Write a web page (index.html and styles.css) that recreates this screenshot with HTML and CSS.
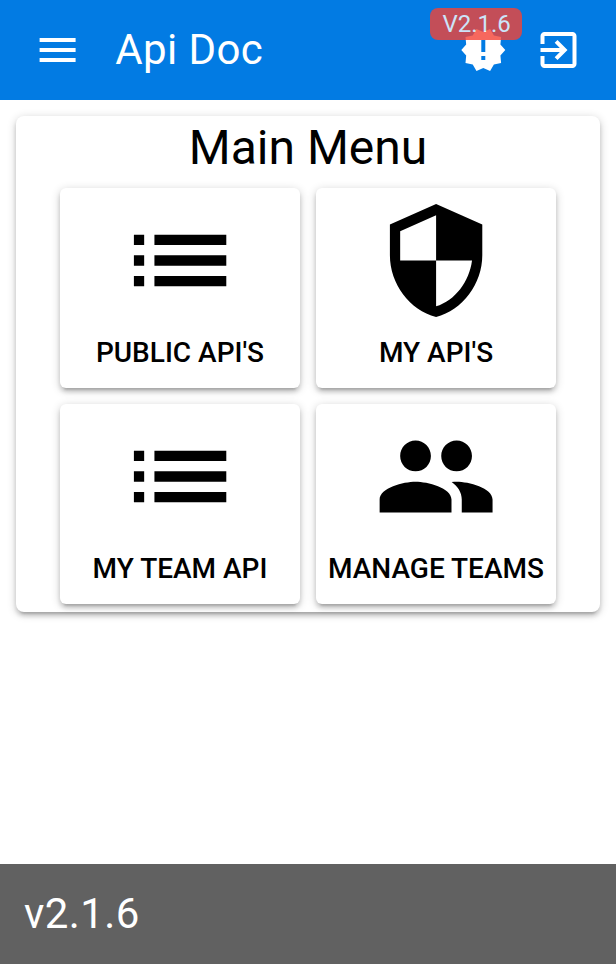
FILE: index.html
```html
<!DOCTYPE html>
<html lang="en">
<head>
<meta charset="utf-8">
<title>Api Doc</title>
<link rel="stylesheet" href="styles.css">
</head>
<body>
<div class="layout">
  <header class="toolbar header">
    <button class="round-btn menu-btn" aria-label="Menu">
      <svg class="icon" viewBox="0 0 24 24"><path d="M3 18h18v-2H3v2zm0-5h18v-2H3v2zm0-7v2h18V6H3z"/></svg>
    </button>
    <div class="toolbar-title header-title">Api Doc</div>
    <button class="round-btn release-btn" aria-label="Release">
      <svg class="icon" viewBox="0 0 24 24"><path d="M23 12l-2.44-2.78.34-3.68-3.61-.82-1.89-3.18L12 3 8.6 1.54 6.71 4.72l-3.61.81.34 3.68L1 12l2.44 2.78-.34 3.69 3.61.82 1.89 3.18L12 21l3.4 1.46 1.89-3.18 3.61-.82-.34-3.68L23 12zm-10 5h-2v-2h2v2zm0-4h-2V7h2v6z"/></svg>
      <span class="badge">V2.1.6</span>
    </button>
    <button class="round-btn exit-btn" aria-label="Exit">
      <svg class="icon" viewBox="0 0 24 24"><path d="M10.09 15.59L11.5 17l5-5-5-5-1.41 1.41L12.67 11H3v2h9.67l-2.58 2.59zM19 3H5c-1.11 0-2 .9-2 2v4h2V5h14v14H5v-4H3v4c0 1.1.89 2 2 2h14c1.1 0 2-.9 2-2V5c0-1.1-.9-2-2-2z"/></svg>
    </button>
  </header>
  <main class="page">
    <section class="card">
      <h1 class="card-title">Main Menu</h1>
      <div class="tiles">
        <button class="tile">
          <svg class="tile-icon" viewBox="0 0 24 24"><path d="M3 13h2v-2H3v2zm0 4h2v-2H3v2zm0-8h2V7H3v2zm4 4h14v-2H7v2zm0 4h14v-2H7v2zM7 7v2h14V7H7z"/></svg>
          <span>PUBLIC API'S</span>
        </button>
        <button class="tile">
          <svg class="tile-icon" viewBox="0 0 24 24"><path d="M12 1L3 5v6c0 5.55 3.84 10.74 9 12 5.16-1.26 9-6.45 9-12V5l-9-4zm0 10.99h7c-.53 4.12-3.28 7.79-7 8.94V12H5V6.3l7-3.11v8.8z"/></svg>
          <span>MY API'S</span>
        </button>
        <button class="tile">
          <svg class="tile-icon" viewBox="0 0 24 24"><path d="M3 13h2v-2H3v2zm0 4h2v-2H3v2zm0-8h2V7H3v2zm4 4h14v-2H7v2zm0 4h14v-2H7v2zM7 7v2h14V7H7z"/></svg>
          <span>MY TEAM API</span>
        </button>
        <button class="tile">
          <svg class="tile-icon" viewBox="0 0 24 24"><path d="M16 11c1.66 0 2.99-1.34 2.99-3S17.66 5 16 5c-1.66 0-3 1.34-3 3s1.34 3 3 3zm-8 0c1.66 0 2.99-1.34 2.99-3S9.66 5 8 5C6.34 5 5 6.34 5 8s1.34 3 3 3zm0 2c-2.33 0-7 1.17-7 3.5V19h14v-2.5c0-2.33-4.67-3.5-7-3.5zm8 0c-.29 0-.62.02-.97.05 1.16.84 1.97 1.97 1.97 3.45V19h6v-2.5c0-2.33-4.67-3.5-7-3.5z"/></svg>
          <span>MANAGE TEAMS</span>
        </button>
      </div>
    </section>
  </main>
  <footer class="toolbar footer">
    <div class="toolbar-title">v2.1.6</div>
  </footer>
</div>
</body>
</html>
```
FILE: styles.css
```css
* {
  box-sizing: border-box;
}

body {
  margin: 0;
  background: #fff;
  color: #000;
  font-family: Roboto, sans-serif;
}

button {
  margin: 0;
  border: 0;
  padding: 0;
  font: inherit;
  color: inherit;
  background: none;
}

svg {
  display: block;
  fill: currentColor;
  overflow: visible;
}

.layout {
  display: flex;
  flex-direction: column;
  height: 100vh;
}

.toolbar {
  display: flex;
  flex: none;
  align-items: center;
  height: 100px;
  padding: 0 24px;
  color: #fff;
}

.header {
  background: #027be3;
}

.footer {
  background: #616161;
}

.toolbar-title {
  flex: 1;
  font-size: 42px;
  letter-spacing: 0.01em;
  line-height: 62px;
}

.header-title {
  padding: 0 24px;
}

.round-btn {
  position: relative;
  display: flex;
  align-items: center;
  justify-content: center;
  width: 67.2px;
  height: 67.2px;
}

.release-btn {
  margin-right: 8px;
}

.icon {
  width: 48px;
  height: 48px;
}

.menu-btn .icon {
  transform: translateX(-0.4px);
}

.release-btn .icon {
  transform: translateX(0.3px);
}

.exit-btn .icon {
  transform: translateX(0.5px);
}

.badge {
  position: absolute;
  top: -8px;
  right: -5px;
  padding: 4px 11px 4px 12.5px;
  border-radius: 8px;
  background: #f44336;
  font-size: 24px;
  line-height: 24px;
  opacity: 0.8;
}

.page {
  flex: 1;
  padding: 16px;
}

.card,
.tile {
  background: #fff;
  box-shadow: 0 2px 10px rgba(0, 0, 0, 0.2), 0 4px 4px rgba(0, 0, 0, 0.14),
    0 6px 2px -4px rgba(0, 0, 0, 0.12);
}

.card {
  padding-bottom: 8px;
  border-radius: 8px;
}

.card-title {
  margin: 0 0 8px;
  font-size: 48px;
  font-weight: 400;
  line-height: 64px;
  text-align: center;
}

.tiles {
  display: grid;
  grid-template-columns: 240px 240px;
  grid-auto-rows: 200px;
  gap: 16px;
  justify-content: center;
}

.tile {
  display: flex;
  flex-direction: column;
  align-items: center;
  justify-content: center;
  gap: 7px;
  border-radius: 6px;
  font-size: 28px;
  font-weight: 500;
  line-height: 48px;
  white-space: nowrap;
}

.tile-icon {
  width: 123.2px;
  height: 123.2px;
  transform: translate(0.5px, -0.1px);
}
```
